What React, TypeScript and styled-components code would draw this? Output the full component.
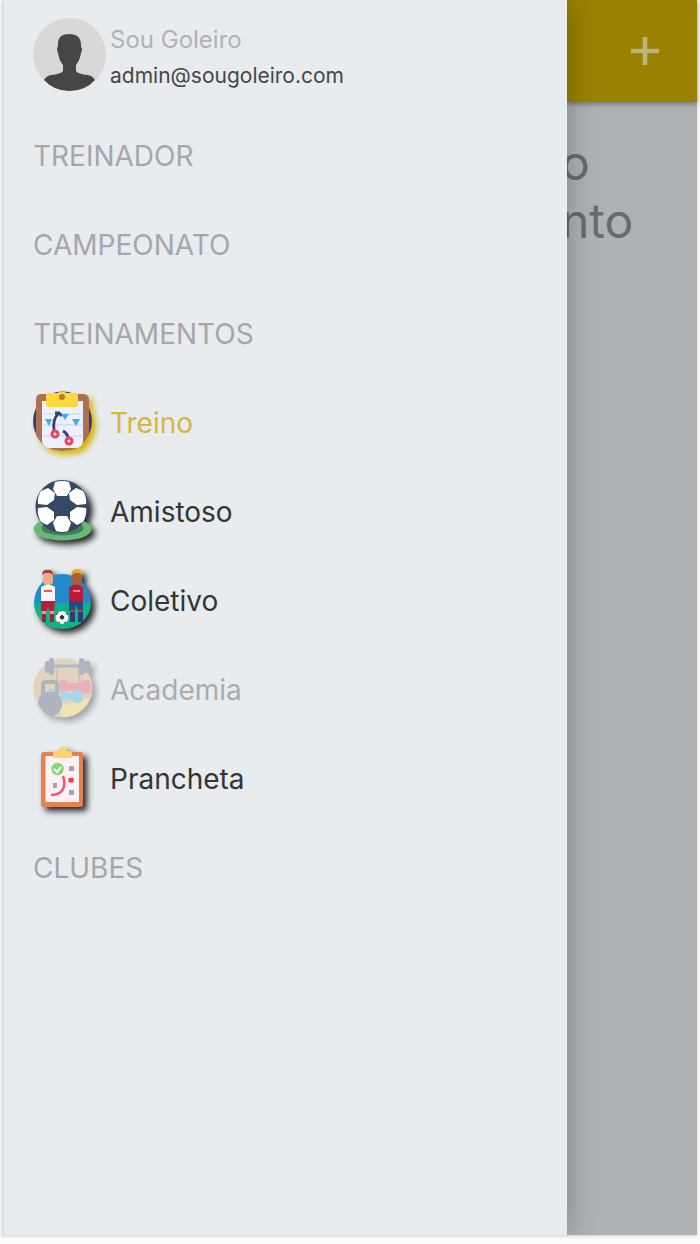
import React from "react";
import styled, { createGlobalStyle } from "styled-components";

const GlobalStyle = createGlobalStyle`
  *, *::before, *::after { box-sizing: border-box; }
  body {
    margin: 0;
    background: #fbfbfb;
    font-family: Inter, "Liberation Sans", sans-serif;
  }
`;

const Screen = styled.div`
  display: flex;
  min-height: calc(100vh - 9px);
  margin: 0 3px 8px 2px;
  border-left: 2px solid #dfe1e3;
  box-shadow: 0 1px 3px #cccccc;
`;

const Drawer = styled.aside`
  flex: 0 0 calc(100% - 130px);
  position: relative;
  z-index: 1;
  background: #e8ecef;
  box-shadow: 2px 0 28px rgba(0, 0, 0, 0.24);
  clip-path: inset(0 -40px 0 0);
`;

const Profile = styled.header`
  display: flex;
  gap: 4px;
  height: 111px;
  padding: 18px 0 0 29px;
`;

const Avatar = styled.svg`
  flex: none;
  width: 73px;
  height: 73px;
`;

const Identity = styled.div`
  padding-top: 4px;
  line-height: 36px;
`;

const UserName = styled.div`
  font-size: 24px;
  color: #afb2b8;
`;

const Email = styled.div`
  font-size: 21px;
  color: #444648;
`;

const Section = styled.button`
  display: block;
  width: 100%;
  height: 89px;
  padding: 0 0 0 29px;
  border: 0;
  background: none;
  font: inherit;
  font-size: 28px;
  text-align: left;
  color: #a4a7ad;
`;

type Tone = "active" | "normal" | "disabled";

const tones = {
  active: { text: "#d5b83b", shadow: "#d3b000" },
  normal: { text: "#333537", shadow: "rgba(0, 0, 0, 0.85)" },
  disabled: { text: "#a9acb0", shadow: "rgba(0, 0, 0, 0.85)" },
};

const Item = styled.a<{ $tone: Tone }>`
  display: flex;
  align-items: center;
  gap: 15px;
  height: 89px;
  padding-left: 29px;
  font-size: 28px;
  text-decoration: none;
  color: ${(p) => tones[p.$tone].text};

  svg {
    flex: none;
    width: 62px;
    height: 64px;
    overflow: visible;
    opacity: ${(p) => (p.$tone === "disabled" ? 0.35 : 1)};
    filter: drop-shadow(4px 4px 3px ${(p) => tones[p.$tone].shadow});
  }
`;

const Content = styled.main`
  flex: 1;
  min-width: 0;
  background: #aeb2b5;
`;

const AppBar = styled.div`
  display: flex;
  align-items: center;
  justify-content: flex-end;
  height: 102px;
  padding-right: 32px;
  background: #9a8200;
  box-shadow: 0 2px 5px rgba(0, 0, 0, 0.35);
`;

const AddButton = styled.button`
  padding: 0;
  border: 0;
  background: none;
  line-height: 0;
`;

const Title = styled.h1`
  margin: 32px 0 0 -6px;
  font-size: 48px;
  font-weight: 400;
  line-height: 58px;
  color: #686b6d;
`;

const TrainingIcon = () => (
  <svg viewBox="0 0 62 64" aria-hidden="true">
    <circle cx="29.5" cy="30" r="29.5" fill="#2f416b" />
    <path d="M8 3H50Q56 3 56 9V43Q50 57 38 59H21Q8 55 3 44V9Q3 3 8 3Z" fill="#aa7156" />
    <path d="M9 10H50V51Q49 56 44 57H15Q9 54 9 50Z" fill="#eef0fd" />
    <path d="M10 23H49M10 34H49M10 45H49" stroke="#d5daf2" strokeWidth="1.5" />
    <path d="M16 2H24Q29 -1 34 2H42Q45 2 45 5V13Q45 16 42 16H16Q13 16 13 13V5Q13 2 16 2Z" fill="#fbd83b" />
    <circle cx="29" cy="6" r="3" fill="#b87a38" />
    <path d="M21 39C20 32 21 27 25 23M22 22L26 22L29 25M30 40Q34 42 35 46" fill="none" stroke="#35436f" strokeWidth="2.8" />
    <path d="M12 28H19L16 35ZM28 23H36L32 29ZM39 28H47L43 35Z" fill="#45aaf2" />
    <circle cx="22" cy="43" r="3" fill="#fff" stroke="#ed4062" strokeWidth="3" />
    <circle cx="36" cy="50" r="3" fill="#fff" stroke="#ed4062" strokeWidth="3" />
  </svg>
);

const BallIcon = () => (
  <svg viewBox="0 0 62 64" aria-hidden="true">
    <ellipse cx="29.5" cy="49" rx="29" ry="11.5" fill="#68b978" />
    <ellipse cx="29.5" cy="48" rx="21" ry="7.5" fill="#3e8059" />
    <circle cx="29" cy="26.5" r="26.5" fill="#344a64" />
    <g fill="#fff">
      <path d="M22 2Q29 0 36 2L38 9L34 16H24L20 9Z" />
      <path d="M8 11L15 8L22 13L21 20L14 25L5 24Q4 17 8 11Z" />
      <path d="M50 11L43 8L36 13L37 20L44 25L53 24Q54 17 50 11Z" />
      <path d="M5 28L14 27L21 32L21 40L14 45L8 42Q4 35 5 28Z" />
      <path d="M53 28L44 27L37 32L37 40L44 45L50 42Q54 35 53 28Z" />
      <path d="M24 36H34L38 43L35 51Q29 53 23 51L20 43Z" />
    </g>
  </svg>
);

const TeamIcon = () => (
  <svg viewBox="0 0 62 64" aria-hidden="true">
    <path d="M1 34A28.5 29 0 0 1 58 34Z" fill="#258bc8" />
    <path d="M1 34H58A28.5 26 0 0 1 1 34Z" fill="#12b18b" />
    <rect x="10" y="3" width="10" height="13" rx="4" fill="#edae86" />
    <path d="M9 6Q9 0 15 1Q20 0 20 6L17 4H12Z" fill="#a6453d" />
    <path d="M8 18Q15 13 22 18V32H8Z" fill="#fbf5f6" />
    <path d="M11 21H19V23H11Z" fill="#ed5363" />
    <path d="M8 32H22L21 42H16L15 36L14 42H8Z" fill="#b71f3c" />
    <path d="M9 42H13V46H9ZM17 42H21V46H17Z" fill="#e5a07b" />
    <path d="M9 45H13V53H9ZM17 45H21V53H17Z" fill="#9e263c" />
    <rect x="39" y="3" width="10" height="13" rx="4" fill="#a96037" />
    <path d="M38 6Q38 0 44 0Q50 0 50 6L46 4H42Z" fill="#e6a636" />
    <path d="M36 18Q43 13 50 18V32H36Z" fill="#bd1938" />
    <path d="M40 21H47V23H40Z" fill="#f28491" />
    <path d="M36 32H50V42H45L43 36L42 42H36Z" fill="#264c88" />
    <path d="M37 41H42V53H37ZM45 41H50V53H45Z" fill="#284075" />
    <path d="M37 41H42V43H37ZM45 41H50V43H45Z" fill="#935539" />
    <circle cx="29" cy="48.5" r="6.5" fill="#f6f6f6" />
    <path d="M29 46L31 48L30 50H28L27 48ZM23 46L25 44M33 44L35 46M25 53L27 54M33 53L31 54" fill="#334" stroke="#334" />
  </svg>
);

const GymIcon = () => (
  <svg viewBox="0 0 62 64" aria-hidden="true">
    <circle cx="30" cy="30" r="29.5" fill="#d9a568" />
    <path d="M20 50L57 40Q50 57 31 59Z" fill="#ffd74f" />
    <path d="M24 8V28M46 8V28" stroke="#9f805c" strokeWidth="2" />
    <path d="M17 8H52" stroke="#505b70" strokeWidth="3" />
    <g fill="#46516a">
      <rect x="12" y="3" width="5" height="12" rx="2" />
      <rect x="16" y="0" width="5" height="17" rx="2" />
      <rect x="46" y="0" width="5" height="17" rx="2" />
      <rect x="51" y="3" width="6" height="12" rx="2" />
    </g>
    <path d="M27 22Q33 20 36 25H46Q50 20 57 23L59 34Q52 38 47 33H35Q29 37 25 32Z" fill="#f0455d" />
    <path d="M28 34Q33 31 36 35H39Q43 30 48 33Q52 39 48 44Q43 47 39 42H34Q29 45 27 40Z" fill="#38b3dc" />
    <path d="M15 31H23V36H15Z" fill="#38b3dc" />
    <path d="M10 37V27Q10 24 13 24H21Q24 24 24 27V37" fill="none" stroke="#46516a" strokeWidth="4" />
    <path d="M11 34H23Q30 40 29 48Q27 57 19 58Q10 56 5 46Q5 38 11 34Z" fill="#46516a" />
  </svg>
);

const ClipboardIcon = () => (
  <svg viewBox="0 0 62 64" aria-hidden="true">
    <rect x="8" y="5" width="42" height="55" rx="3" fill="#e58251" />
    <rect x="12.5" y="9" width="33.5" height="46" fill="#fdf2f3" />
    <path d="M20 5H25Q25 0 30 0Q34 0 34 4H37Q39 4 39 7V11H20Z" fill="#fcd46c" />
    <circle cx="24.5" cy="22" r="6.2" fill="#83d979" />
    <path d="M21 22L24 25L28 20" fill="none" stroke="#fff" strokeWidth="2" />
    <path d="M36 19H41V24H36ZM20 36H24V41H20ZM36 43H41V48H36Z" fill="#a7a1af" />
    <rect x="35.5" y="31" width="5" height="4.5" fill="#fb3b4b" />
    <path d="M30 29C34 40 29 48 18 48" fill="none" stroke="#f2566e" strokeWidth="2.5" />
  </svg>
);

const items: { label: string; tone: Tone; Icon: () => React.JSX.Element }[] = [
  { label: "Treino", tone: "active", Icon: TrainingIcon },
  { label: "Amistoso", tone: "normal", Icon: BallIcon },
  { label: "Coletivo", tone: "normal", Icon: TeamIcon },
  { label: "Academia", tone: "disabled", Icon: GymIcon },
  { label: "Prancheta", tone: "normal", Icon: ClipboardIcon },
];

export default function App() {
  return (
    <>
      <GlobalStyle />
      <Screen>
        <Drawer>
          <Profile>
            <Avatar viewBox="0 0 73 73" aria-hidden="true">
              <circle cx="36.5" cy="36.5" r="36.5" fill="#d8d8d8" />
              <path
                d="M25 28Q24 16 36 16Q49 16 48 29Q50 31 48 35Q47 42 43 47V53Q45 56 55 57Q60 58 62 62Q52 73 36.5 73Q21 73 11 62Q13 58 18 57Q28 56 30 53V47Q26 42 25 35Q23 31 25 28Z"
                fill="#464646"
              />
            </Avatar>
            <Identity>
              <UserName>Sou Goleiro</UserName>
              <Email>admin@sougoleiro.com</Email>
            </Identity>
          </Profile>
          <nav>
            <Section type="button">TREINADOR</Section>
            <Section type="button">CAMPEONATO</Section>
            <Section type="button">TREINAMENTOS</Section>
            {items.map(({ label, tone, Icon }) => (
              <Item key={label} href="#" $tone={tone}>
                <Icon />
                {label}
              </Item>
            ))}
            <Section type="button">CLUBES</Section>
          </nav>
        </Drawer>
        <Content>
          <AppBar>
            <AddButton type="button" aria-label="Adicionar">
              <svg width="40" height="40" viewBox="0 0 40 40">
                <path d="M20 6V34M6 20H34" stroke="#bdb479" strokeWidth="4.5" />
              </svg>
            </AddButton>
          </AppBar>
          <Title>
            o<br />
            nto
          </Title>
        </Content>
      </Screen>
    </>
  );
}
